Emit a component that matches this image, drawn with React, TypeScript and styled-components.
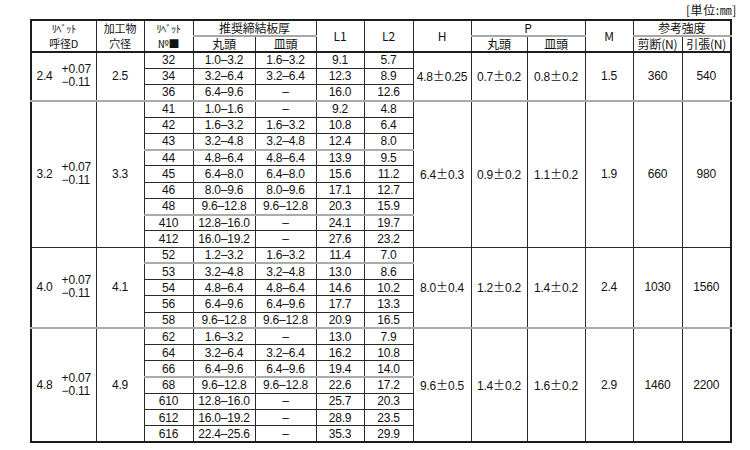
import React from 'react';
import styled, { createGlobalStyle, css } from 'styled-components';

type Sep = 'none' | 'line' | 'gray';

interface RivetRow {
  no: string;
  round: string;
  flat: string;
  l1: string;
  l2: string;
  sep?: Sep;
}

interface RivetGroup {
  d: string;
  hole: string;
  h: string;
  pRound: string;
  pFlat: string;
  m: string;
  shear: string;
  tensile: string;
  sep: Sep;
  rows: RivetRow[];
}

const r = (no: string, round: string, flat: string, l1: string, l2: string, sep?: Sep): RivetRow => ({
  no,
  round,
  flat,
  l1,
  l2,
  sep,
});

const GROUPS: RivetGroup[] = [
  {
    d: '2.4',
    hole: '2.5',
    h: '4.8±0.25',
    pRound: '0.7±0.2',
    pFlat: '0.8±0.2',
    m: '1.5',
    shear: '360',
    tensile: '540',
    sep: 'none',
    rows: [
      r('32', '1.0–3.2', '1.6–3.2', '9.1', '5.7'),
      r('34', '3.2–6.4', '3.2–6.4', '12.3', '8.9'),
      r('36', '6.4–9.6', '–', '16.0', '12.6'),
    ],
  },
  {
    d: '3.2',
    hole: '3.3',
    h: '6.4±0.3',
    pRound: '0.9±0.2',
    pFlat: '1.1±0.2',
    m: '1.9',
    shear: '660',
    tensile: '980',
    sep: 'gray',
    rows: [
      r('41', '1.0–1.6', '–', '9.2', '4.8'),
      r('42', '1.6–3.2', '1.6–3.2', '10.8', '6.4'),
      r('43', '3.2–4.8', '3.2–4.8', '12.4', '8.0'),
      r('44', '4.8–6.4', '4.8–6.4', '13.9', '9.5', 'gray'),
      r('45', '6.4–8.0', '6.4–8.0', '15.6', '11.2'),
      r('46', '8.0–9.6', '8.0–9.6', '17.1', '12.7'),
      r('48', '9.6–12.8', '9.6–12.8', '20.3', '15.9'),
      r('410', '12.8–16.0', '–', '24.1', '19.7', 'gray'),
      r('412', '16.0–19.2', '–', '27.6', '23.2'),
    ],
  },
  {
    d: '4.0',
    hole: '4.1',
    h: '8.0±0.4',
    pRound: '1.2±0.2',
    pFlat: '1.4±0.2',
    m: '2.4',
    shear: '1030',
    tensile: '1560',
    sep: 'line',
    rows: [
      r('52', '1.2–3.2', '1.6–3.2', '11.4', '7.0'),
      r('53', '3.2–4.8', '3.2–4.8', '13.0', '8.6', 'gray'),
      r('54', '4.8–6.4', '4.8–6.4', '14.6', '10.2'),
      r('56', '6.4–9.6', '6.4–9.6', '17.7', '13.3'),
      r('58', '9.6–12.8', '9.6–12.8', '20.9', '16.5'),
    ],
  },
  {
    d: '4.8',
    hole: '4.9',
    h: '9.6±0.5',
    pRound: '1.4±0.2',
    pFlat: '1.6±0.2',
    m: '2.9',
    shear: '1460',
    tensile: '2200',
    sep: 'gray',
    rows: [
      r('62', '1.6–3.2', '–', '13.0', '7.9'),
      r('64', '3.2–6.4', '3.2–6.4', '16.2', '10.8'),
      r('66', '6.4–9.6', '6.4–9.6', '19.4', '14.0'),
      r('68', '9.6–12.8', '9.6–12.8', '22.6', '17.2', 'gray'),
      r('610', '12.8–16.0', '–', '25.7', '20.3'),
      r('612', '16.0–19.2', '–', '28.9', '23.5'),
      r('616', '22.4–25.6', '–', '35.3', '29.9'),
    ],
  },
];

const COLS = [65, 48, 49, 62, 61, 48, 49, 58, 56, 58, 48, 49, 49];

// ± is drawn full width in the source sheet
const withPm = (text: string) => {
  const parts = text.split('±');
  if (parts.length === 1) return text;
  return (
    <>
      {parts[0]}
      <Pm>±</Pm>
      {parts[1]}
    </>
  );
};

const App = () => {
  return (
    <>
      <GlobalStyle />
      <Sheet>
        <Unit>[単位:㎜]</Unit>
        <Table>
          <colgroup>
            {COLS.map((w, i) => (
              <col key={i} style={{ width: w }} />
            ))}
          </colgroup>
          <thead>
            <HeadRow $h={16}>
              <Th rowSpan={2}>
                <HeadLine>
                  <Narrow>ﾘﾍﾞｯﾄ</Narrow>
                </HeadLine>
                <HeadLine>呼径D</HeadLine>
              </Th>
              <Th rowSpan={2}>
                <HeadLine>加工物</HeadLine>
                <HeadLine>穴径</HeadLine>
              </Th>
              <Th rowSpan={2}>
                <HeadLine>
                  <Narrow>ﾘﾍﾞｯﾄ</Narrow>
                </HeadLine>
                <HeadLine>№■</HeadLine>
              </Th>
              <Th colSpan={2} $under>
                推奨締結板厚
              </Th>
              <Th rowSpan={2}>L1</Th>
              <Th rowSpan={2}>L2</Th>
              <Th rowSpan={2}>H</Th>
              <Th colSpan={2} $under>
                P
              </Th>
              <Th rowSpan={2}>M</Th>
              <Th colSpan={2} $under>
                参考強度
              </Th>
            </HeadRow>
            <HeadRow $h={16}>
              <Th>丸頭</Th>
              <Th>皿頭</Th>
              <Th>丸頭</Th>
              <Th>皿頭</Th>
              <Th>剪断(N)</Th>
              <Th>引張(N)</Th>
            </HeadRow>
          </thead>
          <tbody>
            {GROUPS.map((g) =>
              g.rows.map((row, i) => (
                <Row key={row.no}>
                  {i === 0 && (
                    <>
                      <Td rowSpan={g.rows.length} $sep={g.sep}>
                        <Diameter>
                          <span>{g.d}</span>
                          <Tolerance>
                            <span>+0.07</span>
                            <span>−0.11</span>
                          </Tolerance>
                        </Diameter>
                      </Td>
                      <Td rowSpan={g.rows.length} $sep={g.sep}>
                        {g.hole}
                      </Td>
                    </>
                  )}
                  <Td $sep={i === 0 ? g.sep : row.sep}>{row.no}</Td>
                  <Td $sep={i === 0 ? g.sep : row.sep}>{row.round}</Td>
                  <Td $sep={i === 0 ? g.sep : row.sep}>{row.flat}</Td>
                  <Td $sep={i === 0 ? g.sep : row.sep}>{row.l1}</Td>
                  <Td $sep={i === 0 ? g.sep : row.sep}>{row.l2}</Td>
                  {i === 0 && (
                    <>
                      <Td rowSpan={g.rows.length} $sep={g.sep}>
                        {withPm(g.h)}
                      </Td>
                      <Td rowSpan={g.rows.length} $sep={g.sep}>
                        {withPm(g.pRound)}
                      </Td>
                      <Td rowSpan={g.rows.length} $sep={g.sep}>
                        {withPm(g.pFlat)}
                      </Td>
                      <Td rowSpan={g.rows.length} $sep={g.sep}>
                        {g.m}
                      </Td>
                      <Td rowSpan={g.rows.length} $sep={g.sep}>
                        {g.shear}
                      </Td>
                      <Td rowSpan={g.rows.length} $sep={g.sep}>
                        {g.tensile}
                      </Td>
                    </>
                  )}
                </Row>
              ))
            )}
          </tbody>
        </Table>
      </Sheet>
    </>
  );
};

const GlobalStyle = createGlobalStyle`
  html, body {
    margin: 0;
    padding: 0;
    background: #ffffff;
  }

  body {
    font-family: "Liberation Sans", "Noto Sans CJK JP", sans-serif;
    color: #111111;
  }
`;

const Sheet = styled.div`
  display: flex;
  flex-direction: column;
  width: 707px;
  padding-left: 30px;
`;

const Unit = styled.div`
  align-self: flex-end;
  height: 19px;
  padding-top: 3px;
  box-sizing: border-box;
  font-size: 12px;
  line-height: 14px;
  letter-spacing: 0.6px;
  font-family: "Noto Sans CJK JP", sans-serif;
`;

const Table = styled.table`
  width: 701px;
  table-layout: fixed;
  border-collapse: collapse;
  border: 2px solid #1c1c1c;
  font-size: 12px;
  line-height: 1;
`;

const HeadRow = styled.tr<{ $h: number }>`
  height: ${({ $h }) => $h}px;
`;

const Th = styled.th<{ $under?: boolean }>`
  padding: 0;
  border: 1px solid #2a2a2a;
  border-bottom: 2px solid #1c1c1c;
  font-weight: normal;
  font-size: 12px;
  line-height: 14px;
  text-align: center;
  vertical-align: middle;
  font-family: "Noto Sans CJK JP", sans-serif;
  letter-spacing: -0.2px;
  white-space: nowrap;

  ${({ $under }) =>
    $under &&
    css`
      border-bottom: 2px solid #a8a8a8;
    `}
`;

// two-line header cells are tight, so their text runs a touch smaller
const HeadLine = styled.div`
  font-size: 11px;
  height: 15px;
  line-height: 15px;
`;

const Narrow = styled.span`
  font-size: 10.5px;
  letter-spacing: -0.5px;
`;

const Row = styled.tr`
  height: 16.25px;
`;

const Td = styled.td<{ $sep?: Sep }>`
  padding: 0;
  border: 1px solid #2a2a2a;
  text-align: center;
  vertical-align: middle;
  white-space: nowrap;
  font-size: 12px;
  letter-spacing: -0.2px;

  ${({ $sep }) =>
    $sep === 'gray' &&
    css`
      border-top: 2px solid #ababab;
    `}
`;

const Pm = styled.span`
  font-family: "Noto Sans CJK JP", sans-serif;
  font-size: 12px;
`;

const Diameter = styled.div`
  display: inline-flex;
  align-items: center;
  gap: 9px;
`;

const Tolerance = styled.div`
  display: flex;
  flex-direction: column;
  align-items: flex-start;
  line-height: 13px;
`;

export default App;
